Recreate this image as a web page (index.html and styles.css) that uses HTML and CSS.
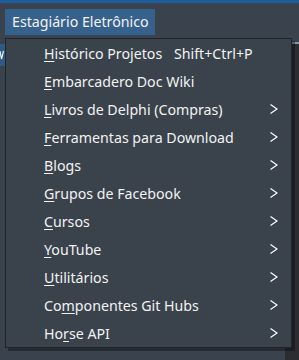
FILE: index.html
```html
<!DOCTYPE html>
<html lang="pt">
<head>
    <meta charset="UTF-8">
    <title>Menu</title>
    <link rel="stylesheet" href="styles.css">
</head>
<body>
    <div class="titlebar"></div>
    <div class="menubar">
        <div class="menubar-item active">Estagiário Eletrônico</div>
    </div>
    <div class="workspace">
        <div class="tab-edge">
            <svg viewBox="0 0 5 22"><polyline points="0,7 1.5,15 3.5,7"/></svg>
        </div>
        <div class="center"></div>
        <div class="side-panel"></div>
    </div>

    <ul class="popup">
        <li><span class="label"><u>H</u>istórico Projetos</span><span class="shortcut">Shift+Ctrl+P</span></li>
        <li><span class="label"><u>E</u>mbarcadero Doc Wiki</span></li>
        <li><span class="label"><u>L</u>ivros de Delphi (Compras)</span><svg class="chev" viewBox="0 0 8 10"><polyline points="0.5,0.5 7,5 0.5,9.5"/></svg></li>
        <li><span class="label"><u>F</u>erramentas para Download</span><svg class="chev" viewBox="0 0 8 10"><polyline points="0.5,0.5 7,5 0.5,9.5"/></svg></li>
        <li><span class="label"><u>B</u>logs</span><svg class="chev" viewBox="0 0 8 10"><polyline points="0.5,0.5 7,5 0.5,9.5"/></svg></li>
        <li><span class="label"><u>G</u>rupos de Facebook</span><svg class="chev" viewBox="0 0 8 10"><polyline points="0.5,0.5 7,5 0.5,9.5"/></svg></li>
        <li><span class="label"><u>C</u>ursos</span><svg class="chev" viewBox="0 0 8 10"><polyline points="0.5,0.5 7,5 0.5,9.5"/></svg></li>
        <li><span class="label"><u>Y</u>ouTube</span><svg class="chev" viewBox="0 0 8 10"><polyline points="0.5,0.5 7,5 0.5,9.5"/></svg></li>
        <li><span class="label"><u>U</u>tilitários</span><svg class="chev" viewBox="0 0 8 10"><polyline points="0.5,0.5 7,5 0.5,9.5"/></svg></li>
        <li><span class="label">Co<u>m</u>ponentes Git Hubs</span><svg class="chev" viewBox="0 0 8 10"><polyline points="0.5,0.5 7,5 0.5,9.5"/></svg></li>
        <li><span class="label">Ho<u>r</u>se API</span><svg class="chev" viewBox="0 0 8 10"><polyline points="0.5,0.5 7,5 0.5,9.5"/></svg></li>
    </ul>
</body>
</html>
```

FILE: styles.css
```css
body {
    margin: 0;
    width: 299px;
    height: 360px;
    overflow: hidden;
    background-color: #3a434d;
    font-family: "Segoe UI", "Noto Sans", sans-serif;
    font-size: 14.2px;
    color: #f2f2f2;
}

.titlebar {
    height: 3px;
    background-color: #1d5f9e;
}

.menubar {
    height: 35px;
    display: flex;
    align-items: flex-end;
    padding-left: 5px;
}

.menubar-item {
    height: 26px;
    line-height: 26px;
    padding: 0 7px;
    margin-bottom: 3px;
    width: 136px;
    white-space: nowrap;
}

.menubar-item.active {
    background-color: #37618d;
}

.workspace {
    display: flex;
    height: 322px;
}

.tab-edge {
    width: 5px;
    height: 22px;
    margin-top: 6px;
    background-color: #2f5a84;
    border-right: 1px solid #26303a;
}

.tab-edge svg {
    display: block;
    width: 5px;
    height: 22px;
    fill: none;
    stroke: #e8eef4;
    stroke-width: 1.2;
}

.center {
    flex: 1;
}

.side-panel {
    width: 14px;
    margin-top: 4px;
    border-top: 2px solid #8494a0;
    background-color: #2b2d32;
}

/* dropdown */
.popup {
    position: absolute;
    left: 5px;
    top: 38px;
    width: 285px;
    margin: 0;
    padding: 0;
    list-style: none;
    background-color: #3a434c;
    border: 1px solid #1f252b;
    box-shadow: 3px 3px 0 rgba(0, 0, 0, 0.35);
}

.popup li {
    display: flex;
    align-items: center;
    height: 28px;
    padding-left: 38px;
    position: relative;
    white-space: nowrap;
}

.popup u {
    text-decoration-thickness: 1px;
    text-underline-offset: 2px;
}

.shortcut {
    position: absolute;
    left: 168px;
}

.chev {
    position: absolute;
    left: 264px;
    top: 9px;
    width: 8px;
    height: 10px;
    fill: none;
    stroke: #ffffff;
    stroke-width: 1.2;
}
```
